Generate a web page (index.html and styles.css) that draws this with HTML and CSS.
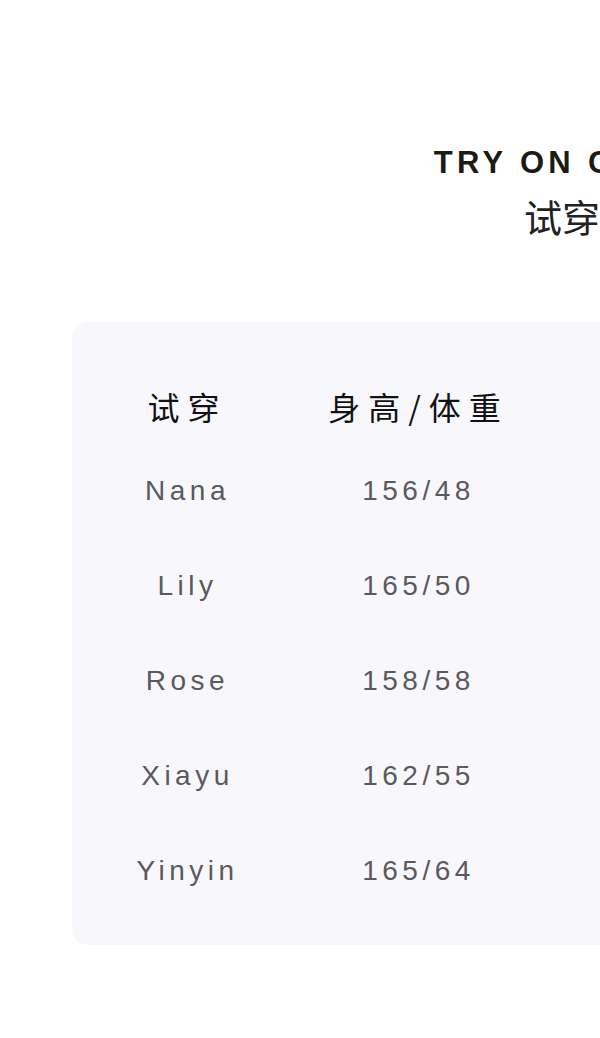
FILE: index.html
```html
<!DOCTYPE html>
<html lang="zh-CN">
<head>
<meta charset="utf-8">
<title>试穿报告</title>
<link rel="stylesheet" href="styles.css">
</head>
<body>
<div class="page">
  <header class="heading">
    <h1 class="heading-en">TRY ON CLOTHES</h1>
    <h2 class="heading-zh">试穿报告</h2>
  </header>
  <section class="card">
    <div class="table">
      <div class="cell head">试穿</div>
      <div class="cell head">身高/体重</div>
      <div class="cell head">尺码</div>
      <div class="cell head">感受</div>

      <div class="cell">Nana</div>
      <div class="cell">156/48</div>
      <div class="cell">S</div>
      <div class="cell">合身</div>

      <div class="cell">Lily</div>
      <div class="cell">165/50</div>
      <div class="cell">M</div>
      <div class="cell">合身</div>

      <div class="cell">Rose</div>
      <div class="cell">158/58</div>
      <div class="cell">L</div>
      <div class="cell">合身</div>

      <div class="cell">Xiayu</div>
      <div class="cell">162/55</div>
      <div class="cell">M</div>
      <div class="cell">合身</div>

      <div class="cell">Yinyin</div>
      <div class="cell">165/64</div>
      <div class="cell">XL</div>
      <div class="cell">合身</div>
    </div>
  </section>
</div>
</body>
</html>
```

FILE: styles.css
```css
html, body {
  margin: 0;
  padding: 0;
  background: #ffffff;
  overflow: hidden;
}

.page {
  width: 1200px;
  font-family: "Liberation Sans", "Noto Sans CJK SC", sans-serif;
}

.heading {
  display: flex;
  flex-direction: column;
  align-items: center;
  padding-top: 141px;
}

.heading-en {
  margin: 0;
  font-size: 31px;
  line-height: 44px;
  font-weight: 700;
  letter-spacing: 4.3px;
  color: #1b1a14;
  font-family: "Liberation Sans", sans-serif;
}

.heading-zh {
  margin: 0;
  margin-top: 6px;
  font-size: 38px;
  line-height: 50px;
  font-weight: 400;
  color: #222222;
  font-family: "Noto Sans CJK SC", sans-serif;
}

.card {
  margin: 81px 72px 0;
  background: #f8f8fc;
  border-radius: 16px;
  padding: 47px 0 27px;
}

.table {
  display: grid;
  grid-template-columns: 231px 231px 1fr 1fr;
  grid-template-rows: 74px repeat(5, 95px);
}

.cell {
  display: flex;
  align-items: center;
  justify-content: center;
  font-size: 28px;
  letter-spacing: 4.5px;
  color: #5a5a5c;
  white-space: nowrap;
}

.cell.head {
  font-family: "Noto Sans CJK SC", sans-serif;
  font-size: 32px;
  letter-spacing: 8px;
  color: #111111;
}
```
